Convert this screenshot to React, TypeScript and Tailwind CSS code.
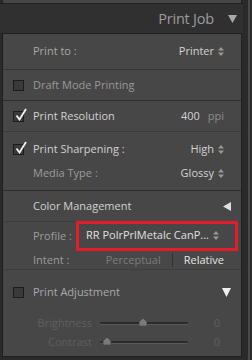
import React from 'react';

const font = { fontFamily: '"Open Sans", "Noto Sans", sans-serif' };

function UpDown() {
    return (
        <svg width="6" height="9" viewBox="0 0 6 9" className="ml-[4px]">
            <path d="M0 3.5 L3 0 L6 3.5 Z" fill="#9a9a9a" />
            <path d="M0 5.5 L3 9 L6 5.5 Z" fill="#9a9a9a" />
        </svg>
    );
}

function Checkbox({ checked }: { checked?: boolean }) {
    return (
        <div className="relative w-[11px] h-[11px] border border-[#1c1c1c] bg-[#3a3a3a] shrink-0">
            {checked && (
                <svg width="12" height="13" viewBox="0 0 12 13" className="absolute left-[1px] top-[-4px]">
                    <path d="M1.5 7.5 L4.5 11.5 L11 1" stroke="#f2f2f2" strokeWidth="1.8" fill="none" />
                </svg>
            )}
        </div>
    );
}

function Slider({ pos }: { pos: number }) {
    return (
        <div className="relative w-[88px] h-[10px] flex items-center">
            <div className="w-full h-[3px] bg-[#2a2a2a] border-b border-[#5a5a5a] rounded-full"></div>
            <svg width="10" height="8" viewBox="0 0 10 8" className="absolute top-[0px]" style={{ left: pos }}>
                <path d="M5 0 L9 4 L9 8 L1 8 L1 4 Z" fill="#7a7a7a" stroke="#3a3a3a" strokeWidth="0.6" />
            </svg>
        </div>
    );
}

export default function App() {
    return (
        <div className="flex w-[252px] h-[360px] bg-[#2a2a2a] overflow-hidden text-[11px]" style={font}>
            <div className="w-[243px] flex flex-col">
                {/* previous panel bottom */}
                <div className="h-[3px] ml-[2px] mr-[1px] bg-[#474747] border-l border-r border-[#1f1f1f]"></div>
                <div className="h-[1px] bg-[#1f1f1f]"></div>

                {/* header */}
                <div className="h-[29px] bg-[#303030] flex items-center justify-end pr-[6px]">
                    <span className="text-[14.5px] text-[#9c9c9c] tracking-[-0.2px]">Print Job</span>
                    <svg width="9" height="8" viewBox="0 0 9 8" className="ml-[14px] mt-[1px]">
                        <path d="M0 0 L9 0 L4.5 8 Z" fill="#a8a8a8" />
                    </svg>
                </div>

                {/* panel */}
                <div className="flex-1 ml-[2px] mr-[1px] mb-[3px] bg-[#474747] border border-[#1f1f1f] flex flex-col">
                    <div className="h-[36px] flex items-center pl-[30px] pr-[17px] border-b border-[#363636]">
                        <span className="text-[#a9a9a9]">Print to :</span>
                        <span className="ml-auto text-[#d4d4d4] flex items-center">Printer<UpDown /></span>
                    </div>

                    <div className="h-[31px] flex items-center pl-[10px] border-b border-[#2f2f2f]">
                        <Checkbox />
                        <span className="ml-[9px] text-[#999999]">Draft Mode Printing</span>
                    </div>

                    <div className="h-[31px] flex items-center pl-[10px] pr-[17px] border-b border-[#3a3a3a]">
                        <Checkbox checked />
                        <span className="ml-[9px] text-[#d2d2d2]">Print Resolution</span>
                        <span className="ml-auto text-[#d2d2d2]">400</span>
                        <span className="ml-[8px] text-[#8c8c8c]">ppi</span>
                    </div>

                    <div className="h-[59px] flex flex-col border-b border-[#2f2f2f]">
                        <div className="h-[32px] pt-[2px] flex items-center pl-[10px] pr-[17px]">
                            <Checkbox checked />
                            <span className="ml-[9px] text-[#d2d2d2]">Print Sharpening :</span>
                            <span className="ml-auto text-[#d4d4d4] flex items-center">High<UpDown /></span>
                        </div>
                        <div className="h-[18px] flex items-center pl-[30px] pr-[17px]">
                            <span className="text-[#9c9c9c]">Media Type :</span>
                            <span className="ml-auto text-[#d4d4d4] flex items-center">Glossy<UpDown /></span>
                        </div>
                    </div>

                    <div className="h-[31px] flex items-center pl-[30px] pr-[10px] border-b border-[#3d3d3d]">
                        <span className="text-[#d2d2d2]">Color Management</span>
                        <svg width="8" height="9" viewBox="0 0 8 9" className="ml-auto">
                            <path d="M8 0 L8 9 L0 4.5 Z" fill="#e0e0e0" />
                        </svg>
                    </div>

                    <div className="h-[48px] flex flex-col border-b border-[#3d3d3d]">
                        <div className="h-[29px] flex items-center pl-[30px] pr-[3px]">
                            <span className="text-[#9c9c9c]">Profile :</span>
                            <div className="ml-auto w-[162px] h-[30px] mt-[-2px] border-[3px] border-[#e31b2a] flex items-center pl-[7px] pr-[12px]">
                                <span className="text-[#e0e0e0] whitespace-nowrap">RR PolrPrlMetalc CanP...</span>
                                <UpDown />
                            </div>
                        </div>
                        <div className="h-[18px] flex items-center pl-[30px] pr-[17px]">
                            <span className="text-[#9c9c9c]">Intent :</span>
                            <span className="ml-auto text-[#7c7c7c]">Perceptual</span>
                            <span className="mx-[11px] w-[1px] h-[14px] bg-[#303030]"></span>
                            <span className="text-[#e6e6e6]">Relative</span>
                        </div>
                    </div>

                    <div className="h-[44px] flex items-center pl-[10px] pr-[10px]">
                        <Checkbox />
                        <span className="ml-[9px] text-[#a9a9a9]">Print Adjustment</span>
                        <svg width="9" height="9" viewBox="0 0 9 9" className="ml-auto">
                            <path d="M0 0 L9 0 L4.5 9 Z" fill="#f0f0f0" />
                        </svg>
                    </div>

                    <div className="h-[18px] flex items-center pr-[21px]">
                        <span className="w-[89px] text-right text-[#5f5f5f]">Brightness</span>
                        <div className="ml-[8px]"><Slider pos={38} /></div>
                        <span className="ml-auto text-[#606060]">0</span>
                    </div>
                    <div className="h-[20px] flex items-center pr-[21px]">
                        <span className="w-[89px] text-right text-[#5f5f5f]">Contrast</span>
                        <div className="ml-[8px]"><Slider pos={2} /></div>
                        <span className="ml-auto text-[#606060]">0</span>
                    </div>
                </div>
            </div>

            {/* right edge strip */}
            <div className="flex-1 flex">
                <div className="w-[5px] bg-[#2a2a2a]"></div>
                <div className="w-[2px] bg-[#4a4a4a]"></div>
                <div className="flex-1 bg-[#2a2a2a]"></div>
            </div>
        </div>
    );
}
